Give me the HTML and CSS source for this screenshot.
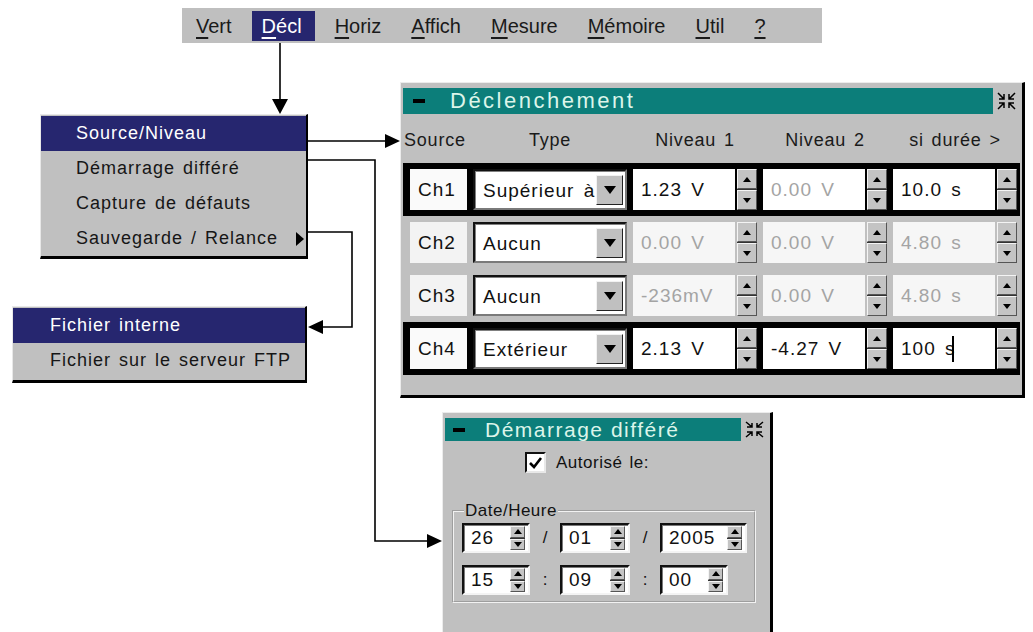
FILE: index.html
```html
<!DOCTYPE html>
<html lang="fr">
<head>
  <meta charset="UTF-8" />
  <title>Déclenchement</title>
  <link rel="stylesheet" href="styles.css">
</head>
<body>
<div class="canvas">

  <div class="menubar">
    <span><u>V</u>ert</span>
    <span class="on"><u>D</u>écl</span>
    <span><u>H</u>oriz</span>
    <span><u>A</u>ffich</span>
    <span><u>M</u>esure</span>
    <span><u>M</u>émoire</span>
    <span><u>U</u>til</span>
    <span><u>?</u></span>
  </div>

  <div class="menu menu-decl">
    <div class="item on">Source/Niveau</div>
    <div class="item">Démarrage différé</div>
    <div class="item">Capture de défauts</div>
    <div class="item sub">Sauvegarde / Relance <b class="caret"></b></div>
  </div>

  <div class="menu menu-save">
    <div class="item on">Fichier interne</div>
    <div class="item">Fichier sur le serveur FTP</div>
  </div>

  <!-- trigger window -->
  <div class="win win-trig">
    <div class="title-row">
      <div class="titlebar"><b class="minus"></b>Déclenchement</div>
      <div class="close">
        <svg width="21" height="20" viewBox="0 0 21 20"><path d="M2 2L8 8M8 3V8H3M19 2L13 8M13 3V8H18M2 18L8 12M3 12H8V17M19 18L13 12M18 12H13V17" fill="none" stroke="#000" stroke-width="1.5"/></svg>
      </div>
    </div>

    <div class="grid heads">
      <div>Source</div>
      <div>Type</div>
      <div>Niveau 1</div>
      <div>Niveau 2</div>
      <div>si durée &gt;</div>
    </div>

    <div class="grid trow sel">
      <div class="src">Ch1</div>
      <div class="combo"><span>Supérieur à</span><b class="drop"></b></div>
      <div class="num"><div class="val">1.23 V</div><div class="spin"><i class="up"></i><i class="dn"></i></div></div>
      <div class="num dim"><div class="val">0.00 V</div><div class="spin"><i class="up"></i><i class="dn"></i></div></div>
      <div class="num"><div class="val">10.0 s</div><div class="spin"><i class="up"></i><i class="dn"></i></div></div>
    </div>

    <div class="grid trow off">
      <div class="src">Ch2</div>
      <div class="combo"><span>Aucun</span><b class="drop"></b></div>
      <div class="num dim"><div class="val">0.00 V</div><div class="spin"><i class="up"></i><i class="dn"></i></div></div>
      <div class="num dim"><div class="val">0.00 V</div><div class="spin"><i class="up"></i><i class="dn"></i></div></div>
      <div class="num dim"><div class="val">4.80 s</div><div class="spin"><i class="up"></i><i class="dn"></i></div></div>
    </div>

    <div class="grid trow off">
      <div class="src">Ch3</div>
      <div class="combo"><span>Aucun</span><b class="drop"></b></div>
      <div class="num dim"><div class="val">-236mV</div><div class="spin"><i class="up"></i><i class="dn"></i></div></div>
      <div class="num dim"><div class="val">0.00 V</div><div class="spin"><i class="up"></i><i class="dn"></i></div></div>
      <div class="num dim"><div class="val">4.80 s</div><div class="spin"><i class="up"></i><i class="dn"></i></div></div>
    </div>

    <div class="grid trow sel">
      <div class="src">Ch4</div>
      <div class="combo"><span>Extérieur</span><b class="drop"></b></div>
      <div class="num"><div class="val">2.13 V</div><div class="spin"><i class="up"></i><i class="dn"></i></div></div>
      <div class="num"><div class="val">-4.27 V</div><div class="spin"><i class="up"></i><i class="dn"></i></div></div>
      <div class="num"><div class="val">100 s<span class="cursor"></span></div><div class="spin"><i class="up"></i><i class="dn"></i></div></div>
    </div>
  </div>

  <!-- delayed start window -->
  <div class="win win-delay">
    <div class="title-row small">
      <div class="titlebar"><b class="minus"></b>Démarrage différé</div>
      <div class="close">
        <svg width="21" height="19" viewBox="0 0 21 19"><path d="M2 2L8 7M8 3V7H3M19 2L13 7M13 3V7H18M2 17L8 12M3 12H8V16M19 17L13 12M18 12H13V16" fill="none" stroke="#000" stroke-width="1.5"/></svg>
      </div>
    </div>

    <div class="allow">
      <span class="check"><svg width="15" height="15" viewBox="0 0 15 15"><path d="M2 8L6 12L13 3" fill="none" stroke="#000" stroke-width="2.6"/></svg></span>
      Autorisé le:
    </div>

    <fieldset class="dt">
      <legend>Date/Heure</legend>
      <div class="dt-grid">
        <div class="field"><span>26</span><div class="spin"><i class="up"></i><i class="dn"></i></div></div>
        <div class="sep">/</div>
        <div class="field"><span>01</span><div class="spin"><i class="up"></i><i class="dn"></i></div></div>
        <div class="sep">/</div>
        <div class="field"><span>2005</span><div class="spin"><i class="up"></i><i class="dn"></i></div></div>

        <div class="field"><span>15</span><div class="spin"><i class="up"></i><i class="dn"></i></div></div>
        <div class="sep">:</div>
        <div class="field"><span>09</span><div class="spin"><i class="up"></i><i class="dn"></i></div></div>
        <div class="sep">:</div>
        <div class="field short"><span>00</span><div class="spin"><i class="up"></i><i class="dn"></i></div></div>
      </div>
    </fieldset>
  </div>

  <!-- connectors -->
  <svg class="links" width="1033" height="632" viewBox="0 0 1033 632">
    <g fill="none" stroke="#000" stroke-width="1.6">
      <path d="M280 43V101"/>
      <path d="M308 141H387"/>
      <path d="M308 160H375V541H429"/>
      <path d="M308 232H352V327H321"/>
    </g>
    <g fill="#000">
      <polygon points="272,99 288,99 280,114"/>
      <polygon points="385,134 385,148 400,141"/>
      <polygon points="427,534 427,548 442,541"/>
      <polygon points="323,320 323,334 308,327"/>
    </g>
  </svg>

</div>
</body>
</html>
```

FILE: styles.css
```css
* {
  box-sizing: border-box;
}
body {
  margin: 0;
  background: #fff;
  font-family: "Liberation Sans", Arial, sans-serif;
  color: #111;
}
.canvas {
  position: relative;
  width: 1033px;
  height: 632px;
  overflow: hidden;
}

/* top menu bar */
.menubar {
  position: absolute;
  left: 182px;
  top: 8px;
  width: 640px;
  height: 35px;
  background: #bfbfbf;
  display: flex;
  align-items: center;
  gap: 10px;
  padding-left: 4px;
  font-size: 20px;
}
.menubar span {
  height: 30px;
  line-height: 30px;
  padding: 0 10px;
  color: #1a1a1a;
}
.menubar .on {
  background: #26266f;
  color: #fff;
  padding-right: 13px;
}
.menubar u {
  text-decoration-thickness: 2px;
  text-underline-offset: 4px;
}

/* popup menus */
.menu {
  position: absolute;
  background: #c0c0c0;
  border-top: 1px solid #e8e8e8;
  border-left: 1px solid #e8e8e8;
  border-right: 2px solid #000;
  border-bottom: 3px solid #000;
  padding: 1px 0 0;
  font-size: 18px;
  letter-spacing: 1px;
  word-spacing: 2px;
}
.menu .item {
  height: 35px;
  line-height: 35px;
  padding-left: 35px;
  color: #161616;
}
.menu .item.on {
  background: #26266f;
  color: #fff;
}
.menu .sub {
  display: flex;
  align-items: center;
  padding-right: 2px;
}
.caret {
  margin-left: auto;
  width: 0;
  height: 0;
  border-left: 8px solid #000;
  border-top: 7px solid transparent;
  border-bottom: 7px solid transparent;
}
.menu-decl {
  left: 40px;
  top: 114px;
  width: 268px;
  height: 145px;
}
.menu-save {
  left: 12px;
  top: 306px;
  width: 295px;
  height: 77px;
}
.menu-save .item {
  padding-left: 37px;
}

/* windows */
.win {
  position: absolute;
  background: #c0c0c0;
  border-top: 1px solid #ececec;
  border-left: 1px solid #ececec;
  border-right: 3px solid #000;
  border-bottom: 3px solid #000;
  padding: 5px 2px 0;
}
.win-trig {
  left: 400px;
  top: 82px;
  width: 625px;
  height: 316px;
}
.win-delay {
  left: 442px;
  top: 412px;
  width: 331px;
  height: 240px;
}
.title-row {
  display: flex;
  height: 26px;
}
.titlebar {
  flex: 1;
  background: #0c7e7a;
  color: #dcf5ea;
  display: flex;
  align-items: center;
  font-size: 22px;
  letter-spacing: 2.5px;
}
.minus {
  width: 12px;
  height: 4px;
  background: #000;
  margin: 0 25px 0 10px;
}
.close {
  width: 27px;
  display: flex;
  align-items: center;
  justify-content: center;
}
.title-row.small {
  height: 23px;
}
.small .titlebar {
  font-size: 21px;
  letter-spacing: 1.5px;
}
.small .minus {
  margin: 0 20px 0 8px;
}

/* trigger table */
.grid {
  display: grid;
  grid-template-columns: 57px 154px 124px 124px 124px;
  column-gap: 6px;
  padding-left: 7px;
}
.heads {
  height: 49px;
  padding-top: 3px;
  align-items: center;
  text-align: center;
  font-size: 18px;
  letter-spacing: 0.8px;
  word-spacing: 2px;
  color: #1a1a1a;
}
.heads div:first-child {
  text-align: left;
  margin-left: -6px;
}
.trow {
  height: 53px;
  padding-top: 6px;
  padding-bottom: 6px;
  font-size: 19px;
  letter-spacing: 1px;
  word-spacing: 3px;
}
.trow.sel {
  background: #000;
}
.src {
  background: #fafafa;
  display: flex;
  align-items: center;
  padding-left: 8px;
}
.off .src {
  background: #f3f3f3;
}
.combo {
  display: flex;
  align-items: center;
  background: #fff;
  border: 2px solid;
  border-color: #111 #7a7a7a #7a7a7a #111;
  box-shadow: inset 1px 1px 0 #808080;
  padding: 2px 2px 2px 8px;
}
.combo span {
  flex: 1;
  padding-top: 3px;
}
.drop {
  width: 27px;
  height: 100%;
  max-height: 30px;
  background: #c0c0c0;
  border: 1px solid;
  border-color: #f2f2f2 #222 #222 #f2f2f2;
  display: flex;
  align-items: center;
  justify-content: center;
}
.drop::after {
  content: '';
  border-top: 8px solid #000;
  border-left: 6px solid transparent;
  border-right: 6px solid transparent;
}
.num {
  display: flex;
  gap: 2px;
}
.val {
  flex: 1;
  background: #fff;
  display: flex;
  align-items: center;
  padding-left: 8px;
}
.dim .val {
  color: #a4a4a4;
}
.off .dim .val {
  background: #f6f6f6;
}
.cursor {
  width: 2px;
  height: 26px;
  background: #000;
  margin-left: -3px;
}

/* spin buttons */
.spin {
  width: 20px;
  display: flex;
  flex-direction: column;
  background: #333;
  gap: 1px;
}
.spin i {
  flex: 1;
  background: #c4c4c4;
  border: 1px solid;
  border-color: #f4f4f4 #555 #555 #f4f4f4;
  display: flex;
  align-items: center;
  justify-content: center;
}
.spin .up::after {
  content: '';
  border-bottom: 5px solid #000;
  border-left: 4px solid transparent;
  border-right: 4px solid transparent;
}
.spin .dn::after {
  content: '';
  border-top: 5px solid #000;
  border-left: 4px solid transparent;
  border-right: 4px solid transparent;
}

/* delayed start */
.allow {
  display: flex;
  align-items: center;
  gap: 10px;
  margin-top: 11px;
  padding-left: 80px;
  font-size: 17px;
  letter-spacing: 0.5px;
  word-spacing: 2px;
}
.check {
  width: 21px;
  height: 21px;
  background: #fff;
  border: 2px solid;
  border-color: #111 #e8e8e8 #e8e8e8 #111;
  display: flex;
  align-items: center;
  justify-content: center;
}
.dt {
  margin: 28px 12px 0 7px;
  border: 2px groove #f2f2f2;
  padding: 2px 6px 6px 8px;
}
.dt legend {
  padding: 0 1px;
  margin-left: 2px;
  font-size: 17px;
  letter-spacing: 0.5px;
}
.dt-grid {
  display: grid;
  grid-template-columns: 68px 30px 70px 30px 87px;
  row-gap: 12px;
}
.field {
  height: 30px;
  background: #fff;
  border: 2px solid;
  border-color: #111 #f4f4f4 #f4f4f4 #111;
  box-shadow: inset 1px 1px 0 #7a7a7a;
  display: flex;
  align-items: center;
  padding: 0 3px 0 7px;
  font-size: 19px;
  letter-spacing: 1px;
}
.field span {
  flex: 1;
}
.field .spin {
  width: 15px;
  height: 24px;
}
.field.short {
  width: 68px;
}
.sep {
  display: flex;
  align-items: center;
  justify-content: center;
  font-size: 17px;
}

/* connectors */
.links {
  position: absolute;
  left: 0;
  top: 0;
  pointer-events: none;
}
```
